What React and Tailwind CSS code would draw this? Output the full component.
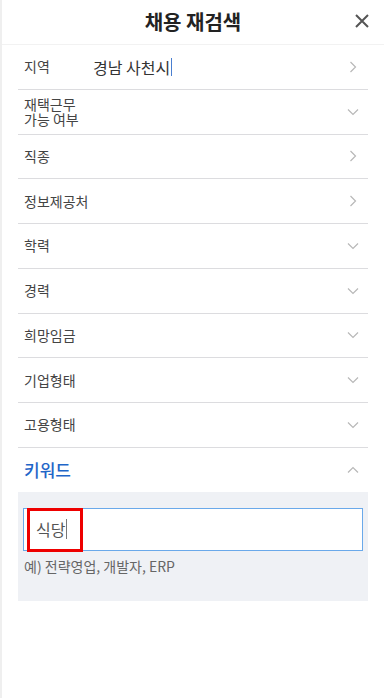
import React from "react";

const Right = () => (
  <svg width="8" height="12" viewBox="0 0 8 12" fill="none" stroke="#b8b8b8" strokeWidth="1.2">
    <path d="M1.5 1 L6.5 6 L1.5 11" />
  </svg>
);
const Down = () => (
  <svg width="12" height="8" viewBox="0 0 12 8" fill="none" stroke="#b8b8b8" strokeWidth="1.2">
    <path d="M1 1.5 L6 6.5 L11 1.5" />
  </svg>
);
const Up = () => (
  <svg width="12" height="8" viewBox="0 0 12 8" fill="none" stroke="#b8b8b8" strokeWidth="1.2">
    <path d="M1 6.5 L6 1.5 L11 6.5" />
  </svg>
);

const Row = ({ children, icon }) => (
  <div className="flex h-[43.75px] items-center justify-between border-b border-[#dcdcdf] pl-[6px] pr-[9px] box-content">
    <div className="flex items-center text-[14px] text-[#444]">{children}</div>
    <div className="flex w-[12px] justify-center">{icon}</div>
  </div>
);

export default function App() {
  return (
    <div
      className="flex min-h-[698px] w-[384px] bg-white"
      style={{ fontFamily: '"Noto Sans CJK KR", "Noto Sans", sans-serif' }}
    >
      <div className="w-[2px] shrink-0 bg-[#efefef]" />
      <div className="flex flex-1 flex-col">
        <div className="relative flex h-[44px] items-center justify-center border-b border-[#f2f2f2] box-content">
          <span className="text-[20px] font-bold text-[#222]">채용 재검색</span>
          <svg className="absolute right-[15px] top-[14px]" width="14" height="14" viewBox="0 0 14 14" stroke="#555" strokeWidth="2">
            <path d="M1 1 L13 13 M13 1 L1 13" />
          </svg>
        </div>
        <div className="mx-[16px] flex flex-col">
          <Row icon={<Right />}>
            <span className="w-[69px]">지역</span>
            <span className="text-[16px] text-[#333]">경남 사천시</span>
            <span className="ml-[1px] h-[18px] w-[1px] bg-[#4a7fd0]" />
          </Row>
          <Row icon={<Down />}>
            <span className="flex flex-col leading-[15px]">
              <span>재택근무</span>
              <span>가능 여부</span>
            </span>
          </Row>
          <Row icon={<Right />}>직종</Row>
          <Row icon={<Right />}>정보제공처</Row>
          <Row icon={<Down />}>학력</Row>
          <Row icon={<Down />}>경력</Row>
          <Row icon={<Down />}>희망임금</Row>
          <Row icon={<Down />}>기업형태</Row>
          <Row icon={<Down />}>고용형태</Row>
          <div className="flex h-[44px] items-center justify-between pl-[6px] pr-[9px]">
            <span className="text-[17px] font-medium text-[#1f66c8]">키워드</span>
            <div className="flex w-[12px] justify-center"><Up /></div>
          </div>
          <div className="h-[109px] bg-[#eff1f5] px-[5px] pt-[16px]">
            <div className="relative flex h-[43px] items-center border border-[#6aa9ea] bg-white pl-[12px]">
              <span className="text-[16px] text-[#555]">식당</span>
              <span className="ml-[1px] h-[20px] w-[1px] bg-[#777]" />
              <div className="absolute left-[3px] top-[-1px] h-[44px] w-[56px] border-[3px] border-[#ee0000]" />
            </div>
            <div className="mt-[5px] pl-[1px] text-[14px] text-[#666]">예) 전략영업, 개발자, ERP</div>
          </div>
        </div>
      </div>
    </div>
  );
}
